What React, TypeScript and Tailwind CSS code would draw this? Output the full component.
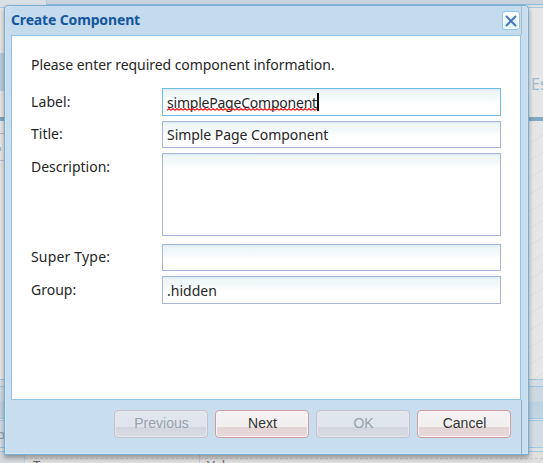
import type { ReactNode } from "react";

const inputBase =
  "box-border w-[339px] border bg-[linear-gradient(to_bottom,#dcecf1_0px,#eff6f8_3px,#f3f8f9_8px,#ffffff_14px)] px-[4px] flex items-center whitespace-pre";

function Row({ label, className, labelClass, children }: { label: string; className: string; labelClass: string; children: ReactNode }) {
  return (
    <div className={`flex items-start ${className}`}>
      <div className={`w-[131px] shrink-0 leading-[20px] ${labelClass}`}>{label}</div>
      {children}
    </div>
  );
}

function DialogButton({ children, disabled = false }: { children: string; disabled?: boolean }) {
  const look = disabled
    ? "border-[#c8c1cd] bg-[linear-gradient(to_bottom,#e1e7ee_0px,#dfe4ed_16px,#d3d6df_16px,#d8dae2_100%)] text-[#99a1ab] shadow-[inset_0_0_0_1px_#e3e8ef]"
    : "border-[#cd9e9f] bg-[linear-gradient(to_bottom,#f3f2f3_0px,#f2eeee_16px,#e2d3d4_16px,#e8dada_100%)] text-[#333333] shadow-[inset_0_0_0_1px_#faf4f4]";
  return (
    <button disabled={disabled} className={`h-[28px] w-[94px] rounded-[4px] border pb-[2px] pl-px text-center font-['Liberation_Sans',Arial,sans-serif] text-[14px] leading-[24px] ${look}`}>
      {children}
    </button>
  );
}

function Backdrop() {
  return (
    <div className="flex h-[463px] flex-col overflow-hidden bg-[#e6e6e6]">
      <div className="flex h-[8px] shrink-0">
        <div className="w-[47px] border-r border-b border-[#a9cbe0] bg-[#d9e0e6]" />
        <div className="flex-1 border-b border-[#a9c6da] bg-[linear-gradient(to_bottom,#c9d4df_4px,#8fbbd9_4px,#8fbbd9_5px,#dce1e5_5px)]" />
      </div>
      <div className="h-[45px] shrink-0" />
      <div className="flex h-[64px] shrink-0 justify-between">
        <div className="h-[38px] w-[5px] bg-[#b9cedb]" />
        <div className="w-[12px] overflow-hidden pt-[21px] font-['Noto_Sans',sans-serif] text-[16px] leading-[20px] text-[#9dbbd0]">Es</div>
      </div>
      <div className="h-[4px] shrink-0 bg-[#83a9c2]" />
      <div className="flex h-[258px] shrink-0">
        <div className="w-[6px]">
          <div className="mt-[12px] h-[28px] border-y border-[#b0bdd6] pt-[13px]"><div className="h-[4px] w-px bg-[#96bfdd]" /></div>
        </div>
        <svg className="ml-auto h-[258px] w-[14px]" viewBox="0 0 14 258">
          {Array.from({ length: 15 }, (_, i) => (
            <path key={i} d={`M0 ${22 + i * 17} Q8 ${19 + i * 17} 14 ${14 + i * 17}`} fill="none" stroke="#dfe0e0" strokeWidth="1.5" />
          ))}
        </svg>
      </div>
      <div className="h-[8px] shrink-0 border-y border-[#9fc6df] bg-[#d5dde4]" />
      <div className="h-[32px] shrink-0 border-b border-[#9dc7e3] bg-[linear-gradient(to_bottom,#cdd9e2_14px,#bdd2e1_15px,#c2d5e2)]" />
      <div className="mt-[1px] h-[28px] shrink-0 overflow-hidden border-y border-[#9dc7e3] bg-[#d1dce4] pt-[4px] font-['Noto_Sans',sans-serif] text-[13px] leading-[18px] text-[#8998a4]">
        <div className="-ml-[9px]">co</div>
      </div>
      <div className="h-[4px] shrink-0 border-b border-[#9dc7e3] bg-[#dde2e5]" />
      <div className="flex flex-1 overflow-hidden bg-[#e0e0e0] font-['Noto_Sans',sans-serif] text-[13px] leading-[14px] text-[#606166]">
        <div className="w-[25px] border-r border-[#bdd1df] bg-[#d5dbe0]" />
        <div className="w-[175px] border-r border-[#c8c8c8]"><div className="mt-[6px] h-[14px] border-t border-dashed border-[#c8c8c8] pl-[8px] leading-[12px]">Type</div></div>
        <div className="flex-1"><div className="mt-[6px] h-[14px] border-t border-dashed border-[#c8c8c8] pl-[7px] leading-[12px]">Value</div></div>
      </div>
    </div>
  );
}

export default function App() {
  return (
    <main className="relative h-[463px] w-[543px] overflow-hidden">
      <Backdrop />
      <section role="dialog" className="absolute top-[5px] left-[4px] flex h-[450px] w-[525px] flex-col rounded-t-[4px] border border-[#7aafd3] bg-[#c8ddee] px-[6px] font-['Noto_Sans',sans-serif] text-[14px] text-[#262626] shadow-[inset_0_0_0_1px_#d1e4f2,0_3px_5px_#00000055]">
        <header className="flex h-[29px] shrink-0 items-start justify-between bg-[#c4dbee]">
          <h1 className="pt-[4px] text-[14px] leading-[20px] font-bold tracking-[-0.15px] text-[#15569d]">Create Component</h1>
          <button aria-label="Close" className="mt-[5px] mr-[2px] flex h-[19px] w-[18px] items-center justify-center rounded-[3px] border border-[#8ec8ee] bg-[linear-gradient(to_bottom,#ffffff,#dff3fe)] shadow-[inset_0_0_0_1px_#ffffff]">
            <svg className="h-[12px] w-[12px]" viewBox="0 0 12 12"><path d="M1 1 11 11M11 1 1 11" stroke="#4777c1" strokeWidth="2.1" /></svg>
          </button>
        </header>
        <div className="h-[365px] w-[510px] shrink-0 border border-[#8fc3e8] bg-white px-[19px] pt-[18px]">
          <p className="h-[34px] leading-[22px] tracking-[-0.055px] whitespace-nowrap">Please enter required component information.</p>
          <Row label="Label:" className="h-[33px]" labelClass="pt-[4px] tracking-[0.1px]">
            <div className={`${inputBase} h-[28px] border-[#6fbde3] pt-[2px]`}>
              <span className="relative leading-[20px] tracking-[-0.22px]">
                simplePageComponent
                <svg className="absolute top-[15px] left-0 h-[3px] w-full">
                  <defs><pattern id="spelling" width="4" height="3" patternUnits="userSpaceOnUse"><path d="M0 2.3 L2 .7 L4 2.3" fill="none" stroke="#f01418" strokeWidth="1.3" /></pattern></defs>
                  <rect width="100%" height="3" fill="url(#spelling)" />
                </svg>
              </span>
              <span className="mb-[2px] h-[18px] w-[2px] bg-black" />
            </div>
          </Row>
          <Row label="Title:" className="h-[32px]" labelClass="pt-[3px]">
            <div className={`${inputBase} h-[27px] border-[#a6b4d7]`}><span className="tracking-[-0.05px]">Simple Page Component</span></div>
          </Row>
          <Row label="Description:" className="h-[91px]" labelClass="pt-[4px]">
            <div className={`${inputBase} h-[83px] border-[#a6b4d7]`} />
          </Row>
          <Row label="Super Type:" className="h-[32px]" labelClass="pt-[3px] tracking-[0.18px]">
            <div className={`${inputBase} h-[27px] border-[#a6b4d7]`} />
          </Row>
          <Row label="Group:" className="h-[28px]" labelClass="pt-[4px]">
            <div className={`${inputBase} h-[28px] border-[#a6b4d7]`}><span>.hidden</span></div>
          </Row>
        </div>
        <footer className="flex justify-end gap-[7px] pt-[10px] pr-[11px]">
          <DialogButton disabled>Previous</DialogButton>
          <DialogButton>Next</DialogButton>
          <DialogButton disabled>OK</DialogButton>
          <DialogButton>Cancel</DialogButton>
        </footer>
        <div className="absolute top-0 right-[6px] h-[29px] w-px bg-[#b5b9bd]" />
        <div className="absolute right-[6px] bottom-0 h-[54px] w-px bg-[#94adbd]" />
      </section>
    </main>
  );
}
